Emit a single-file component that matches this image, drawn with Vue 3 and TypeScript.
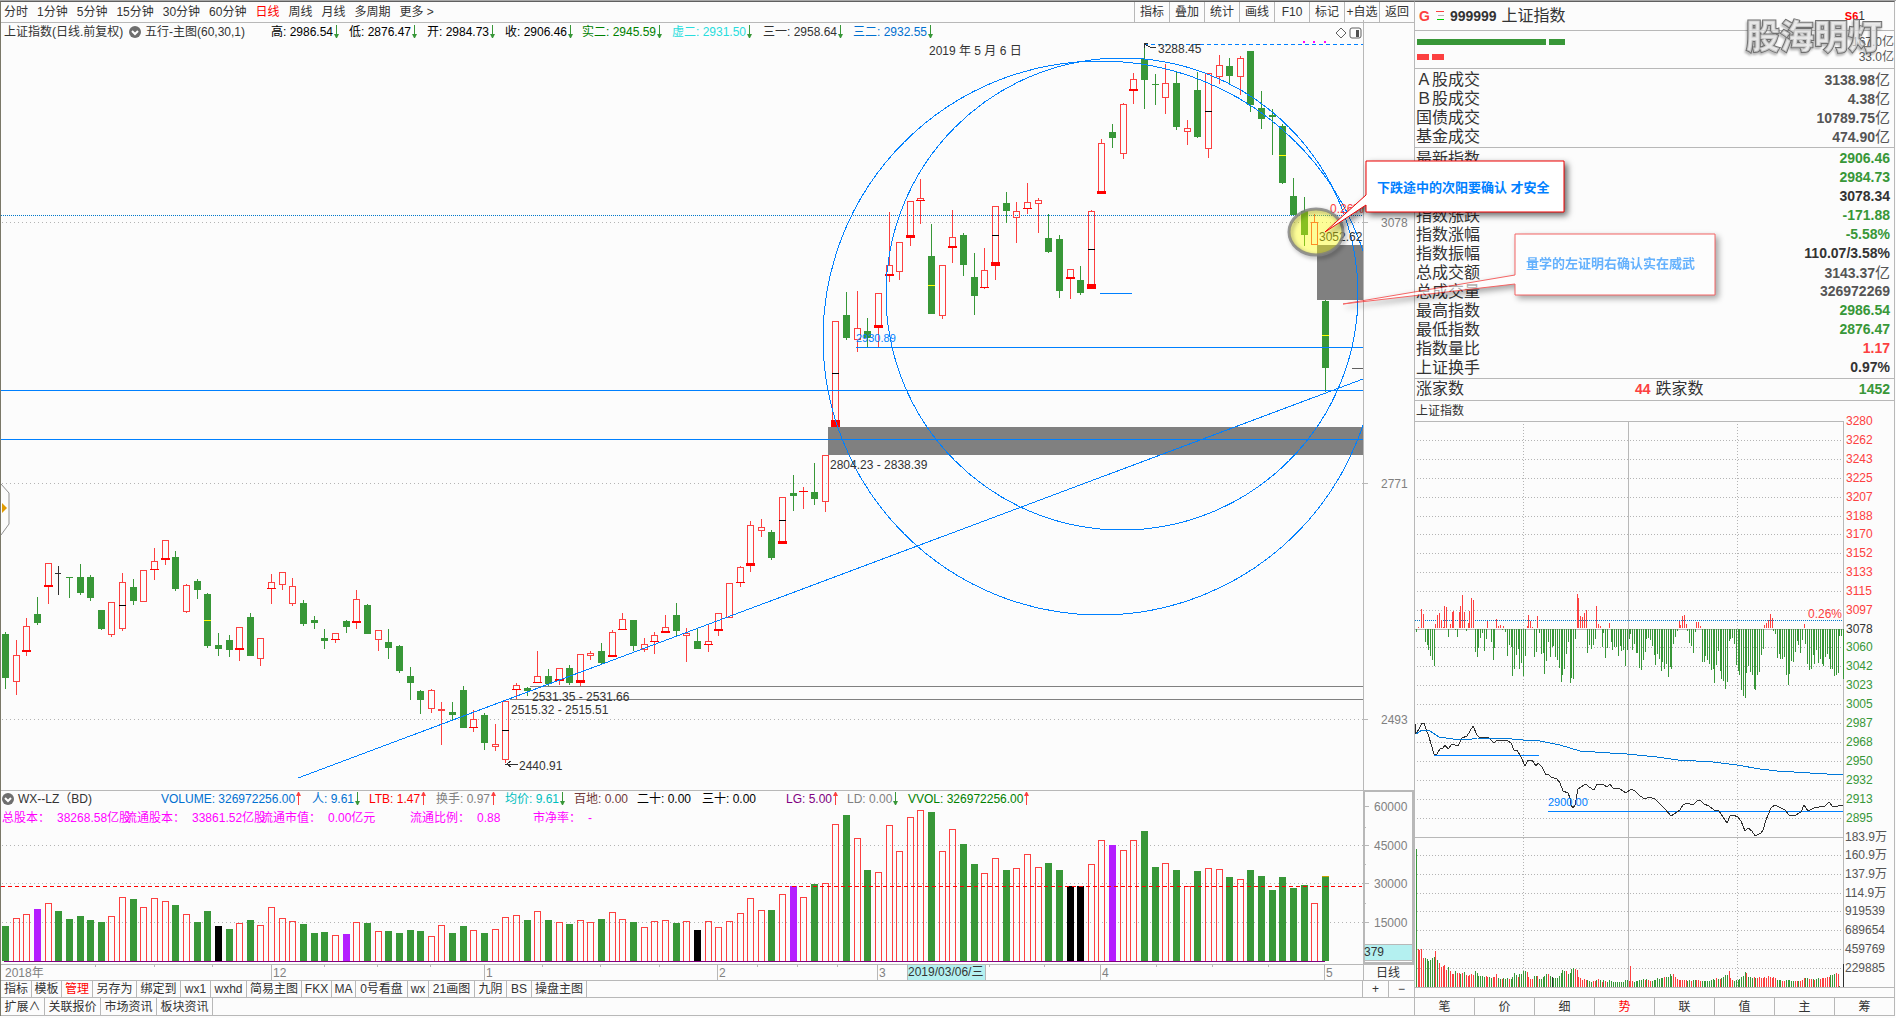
<script setup lang="ts">
type Tone = 'R' | 'G' | 'K' | 'P'
type Point = [number, number]

/* ---------- path helpers ---------- */
const box = (x: number, y: number, w: number, h: number) => `M${x} ${y}h${w}v${h}h${-w}z`
const dotsH = (x1: number, x2: number, y: number, step: number) => {
  let d = ''
  for (let x = x1; x < x2; x += step) d += box(x, y, 1, 1)
  return d
}
const dotsV = (y1: number, y2: number, x: number, step: number) => {
  let d = ''
  for (let y = y1; y < y2; y += step) d += box(x, y, 1, 1)
  return d
}
const third = (v: number) => Math.floor(v / 3)

/* ---------- toolbars ---------- */
const periods = ['分时', '1分钟', '5分钟', '15分钟', '30分钟', '60分钟', '日线', '周线', '月线', '多周期', '更多 >']
const actions = ['指标', '叠加', '统计', '画线', 'F10', '标记', '+自选', '返回']
const templates = ['指标', '模板', '管理', '另存为', '绑定到', 'wx1', 'wxhd', '简易主图', 'FKX', 'MA', '0号看盘', 'wx', '21画图', '九阴', 'BS', '操盘主图']
const feeds = ['扩展∧', '关联报价', '市场资讯', '板块资讯']
const sideTabs = ['笔', '价', '细', '势', '联', '值', '主', '筹']

interface Readout { label: string; tone: string; dir?: 'up' | 'down' }
const priceReadouts: Readout[] = [
  { label: '高: 2986.54', tone: 'black', dir: 'down' },
  { label: '低: 2876.47', tone: 'black', dir: 'down' },
  { label: '开: 2984.73', tone: 'black', dir: 'down' },
  { label: '收: 2906.46', tone: 'black', dir: 'down' },
  { label: '实二: 2945.59', tone: 'green', dir: 'down' },
  { label: '虚二: 2931.50', tone: 'cyan', dir: 'down' },
  { label: '三一: 2958.64', tone: 'dark', dir: 'down' },
  { label: '三二: 2932.55', tone: 'blue', dir: 'down' },
]
const volumeReadouts: Readout[] = [
  { label: 'VOLUME: 326972256.00', tone: 'blue', dir: 'up' },
  { label: '人: 9.61', tone: 'blue', dir: 'down' },
  { label: 'LTB: 1.47', tone: 'red', dir: 'up' },
  { label: '换手: 0.97', tone: 'grey', dir: 'up' },
  { label: '均价: 9.61', tone: 'teal', dir: 'down' },
  { label: '百地: 0.00', tone: 'brown' },
  { label: '二十: 0.00', tone: 'black' },
  { label: '三十: 0.00', tone: 'black' },
  { label: 'LG: 5.00', tone: 'purple', dir: 'up' },
  { label: 'LD: 0.00', tone: 'grey', dir: 'down' },
  { label: 'VVOL: 326972256.00', tone: 'green', dir: 'up' },
]
const shareFacts = [
  ['总股本：', '38268.58亿股'],
  ['流通股本：', '33861.52亿股'],
  ['流通市值：', '0.00亿元'],
  ['流通比例：', '0.88'],
  ['市净率：', '-'],
]

/* ---------- candles: tone, high, body top, body bottom, low, base mark, half line ---------- */
type Candle = [Tone, number, number, number, number, number?, number?]
const candles: Candle[] = [
  ['G', 632, 634, 678, 689], ['R', 640, 655, 682, 695], ['R', 618, 626, 652, 656, 2], ['G', 597, 614, 623, 625],
  ['R', 563, 563, 587, 604, 2], ['K', 566, 573, 574, 595], ['G', 577, 577, 578, 598], ['G', 564, 577, 593, 595],
  ['G', 575, 577, 598, 601], ['G', 610, 610, 629, 630], ['R', 602, 602, 635, 637], ['R', 573, 582, 629, 631, 0, 605],
  ['G', 579, 587, 601, 605], ['R', 570, 570, 602, 602], ['R', 548, 561, 570, 580, 1], ['R', 540, 540, 560, 565, 2],
  ['G', 551, 557, 589, 591], ['R', 584, 585, 612, 613], ['G', 579, 581, 590, 599], ['G', 593, 594, 646, 648, 0, 620],
  ['G', 633, 645, 649, 656], ['G', 635, 640, 650, 657], ['R', 627, 627, 650, 661, 2], ['G', 613, 617, 656, 656],
  ['R', 638, 638, 659, 666], ['R', 574, 582, 589, 604, 1], ['R', 572, 572, 585, 590], ['R', 578, 586, 604, 606],
  ['G', 600, 603, 624, 626], ['G', 616, 620, 623, 629], ['G', 629, 638, 641, 649], ['R', 633, 633, 640, 643, 1],
  ['G', 620, 621, 627, 633], ['R', 590, 599, 623, 629, 2], ['G', 604, 605, 634, 634], ['R', 630, 630, 640, 651],
  ['G', 629, 642, 648, 659], ['G', 645, 646, 671, 673], ['G', 667, 676, 683, 700], ['G', 690, 691, 700, 714],
  ['R', 689, 690, 709, 713], ['R', 702, 709, 711, 745], ['G', 702, 712, 715, 721], ['G', 686, 690, 728, 728],
  ['R', 710, 719, 728, 732, 1], ['G', 713, 715, 743, 750], ['R', 724, 744, 747, 751], ['R', 701, 701, 760, 763, 0, 730],
  ['R', 683, 685, 690, 699, 1], ['G', 687, 688, 691, 696], ['R', 651, 676, 683, 683, 1], ['G', 669, 676, 684, 686],
  ['R', 668, 668, 681, 685, 2], ['G', 665, 668, 683, 685], ['R', 654, 654, 683, 686, 3], ['R', 651, 653, 656, 660],
  ['G', 643, 651, 663, 665], ['R', 630, 632, 657, 657, 2], ['R', 613, 619, 630, 630, 1], ['G', 620, 620, 646, 651],
  ['R', 638, 644, 650, 652], ['R', 632, 635, 642, 654, 1], ['R', 615, 627, 633, 633, 2], ['G', 603, 615, 631, 636],
  ['R', 628, 633, 636, 662], ['G', 629, 641, 649, 649], ['R', 624, 641, 645, 652, 1], ['R', 613, 613, 631, 636, 2],
  ['R', 583, 583, 618, 618], ['R', 566, 567, 583, 587, 1], ['R', 521, 525, 566, 572, 3], ['R', 519, 527, 531, 537],
  ['G', 530, 532, 558, 560], ['R', 497, 497, 544, 544, 3, 520], ['G', 475, 493, 496, 511], ['R', 487, 491, 492, 509, 1],
  ['G', 463, 492, 499, 505], ['R', 455, 455, 502, 512], ['R', 321, 321, 427, 427, 7, 373], ['G', 292, 315, 338, 340],
  ['R', 291, 328, 340, 352], ['G', 318, 331, 338, 347], ['R', 293, 293, 328, 347, 3], ['R', 212, 265, 276, 282, 2],
  ['R', 242, 242, 272, 280], ['R', 201, 201, 238, 246, 3], ['R', 179, 198, 201, 224, 1], ['G', 224, 256, 314, 314, 0, 285],
  ['R', 265, 265, 316, 319], ['R', 210, 237, 248, 263, 2], ['G', 233, 235, 265, 276], ['G', 253, 277, 296, 315],
  ['R', 248, 270, 288, 289, 1], ['R', 206, 206, 266, 280, 4, 235], ['G', 192, 203, 211, 223], ['R', 202, 211, 218, 243],
  ['R', 183, 202, 209, 214, 1], ['R', 198, 200, 204, 233], ['G', 214, 238, 252, 253], ['G', 235, 239, 291, 298],
  ['R', 269, 269, 279, 299, 2], ['G', 266, 280, 293, 295], ['R', 210, 211, 289, 289, 5, 249], ['R', 139, 143, 194, 194, 3],
  ['G', 124, 132, 138, 148], ['R', 103, 104, 154, 159], ['R', 73, 79, 91, 104, 2], ['G', 45, 59, 80, 109],
  ['G', 74, 84, 85, 105], ['R', 64, 83, 98, 114], ['G', 72, 83, 127, 130], ['R', 120, 128, 132, 145],
  ['G', 72, 90, 137, 138], ['R', 73, 73, 149, 158, 0, 111], ['R', 55, 65, 77, 84], ['G', 58, 66, 76, 84],
  ['R', 56, 58, 77, 95], ['G', 51, 51, 105, 112], ['G', 91, 108, 119, 129], ['G', 109, 115, 117, 155],
  ['G', 124, 126, 183, 184, 0, 155], ['G', 178, 196, 215, 215], ['G', 197, 211, 235, 246], ['R', 214, 222, 245, 245],
  ['G', 300, 301, 368, 392, 0, 335],
]
const slotX = (i: number) => Math.round(5 + (i * 1320) / 124)

const hollow = (x: number, y: number, w: number, h: number) =>
  h <= 2 ? box(x, y, w, h) : box(x, y, w, 1) + box(x, y + h - 1, w, 1) + box(x, y, 1, h) + box(x + w - 1, y, 1, h)

const candlePaths = { R: '', G: '', K: '', mark: '', halfUp: '', halfDown: '' }
candles.forEach(([tone, high, top, bottom, low, mark, half], i) => {
  const x = slotX(i)
  if (tone === 'R') {
    candlePaths.R += hollow(x - 3, top, 7, bottom - top)
    if (top > high) candlePaths.R += box(x, high, 1, top - high)
    if (low > bottom) candlePaths.R += box(x, bottom, 1, low - bottom)
  } else if (tone === 'G') {
    candlePaths.G += box(x - 3, top, 7, bottom - top) + box(x, high, 1, low - high)
  } else {
    candlePaths.K += box(x - 3, top, 6, bottom - top) + box(x, high, 1, low - high)
  }
  if (mark) candlePaths.mark += box(x - 4, bottom - mark, 9, mark)
  if (half) candlePaths[tone === 'R' ? 'halfUp' : 'halfDown'] += box(x - 3, half, 7, 1)
})

/* ---------- volume columns: tone and height above the base line ---------- */
const columns = `G35 R43 R47 P52 R58 G50 G42 G45 G41 G39 R45 R64 G62 R54 R63 R60 G56 R47 G39 G50 K35 G32 R38 G41 R36
R54 R43 R40 G37 G28 G29 R26 P27 R39 G38 R30 G30 G28 G31 G30 R25 R36 G28 G35 R31 G28 R32 R44 R46 G41 R50 G41 R39 G37
R41 R39 G42 R49 R42 G39 R34 R40 R41 G38 R40 K31 R40 R34 R40 R48 R63 R51 G51 R67 P75 R64 G77 R78 R137 G146 R123
G91 R89 R136 R110 R144 R151 G149 R110 R132 G117 G97 R88 R103 G91 R93 R107 R94 G98 G91 K75 K75 R97 R121 P116 R111 R121
G130 G94 R98 G91 R75 G90 R93 R92 G84 R82 G91 G85 G71 G84 G73 G76 R58 G84`
  .split(/\s+/)
const volumePaths: Record<Tone, string> = { R: '', G: '', K: '', P: '' }
columns.forEach((entry, i) => {
  const tone = entry[0] as Tone
  const h = Number(entry.slice(1))
  const x = slotX(i) - 3
  const y = 961 - h
  volumePaths[tone] += tone === 'R' ? box(x, y, 7, 1) + box(x, y, 1, h) + box(x + 6, y, 1, h) : box(x, y, 7, h)
})

const priceGrid = [222, 483, 719].map((y) => dotsH(2, 1363, y, 4)).join('')
const volumeGrid = [845, 883, 922].map((y) => dotsH(2, 1363, y, 4)).join('')
const prevCloseDots = dotsH(1, 1363, 215, 2)
const priceScale = [{ y: 222, text: '3078' }, { y: 483, text: '2771' }, { y: 719, text: '2493' }]
const volumeScale = [{ y: 806, text: '60000' }, { y: 845, text: '45000' }, { y: 883, text: '30000' }, { y: 922, text: '15000' }]
const months = [{ x: 271, text: '12' }, { x: 484, text: '1' }, { x: 717, text: '2' }, { x: 877, text: '3' }, { x: 1100, text: '4' }, { x: 1324, text: '5' }]
const weekTicks = [95, 154, 212, 324, 377, 430, 542, 600, 659, 757, 797, 837, 989, 1044, 1156, 1212, 1268]
const timeTicks = months.map((m) => box(m.x, 965, 1, 15)).join('') + weekTicks.map((x) => box(x, 965, 1, 2)).join('')
const volumeTicks = volumeScale.map((s) => box(1365, s.y, 4, 1)).join('') + [827, 864, 903].map((y) => box(1365, y, 1, 1)).join('')

/* ---------- quote panel ---------- */
interface Quote { name: string; value: string; unit?: string; tone: string }
const turnover: Quote[] = [
  { name: 'Ａ股成交', value: '3138.98', unit: '亿', tone: 'mid' },
  { name: 'Ｂ股成交', value: '4.38', unit: '亿', tone: 'mid' },
  { name: '国债成交', value: '10789.75', unit: '亿', tone: 'mid' },
  { name: '基金成交', value: '474.90', unit: '亿', tone: 'mid' },
]
const quotes: Quote[] = [
  { name: '最新指数', value: '2906.46', tone: 'down' },
  { name: '', value: '2984.73', tone: 'down' },
  { name: '', value: '3078.34', tone: 'dark' },
  { name: '指数涨跌', value: '-171.88', tone: 'down' },
  { name: '指数涨幅', value: '-5.58%', tone: 'down' },
  { name: '指数振幅', value: '110.07/3.58%', tone: 'dark' },
  { name: '总成交额', value: '3143.37', unit: '亿', tone: 'mid' },
  { name: '总成交量', value: '326972269', tone: 'mid' },
  { name: '最高指数', value: '2986.54', tone: 'down' },
  { name: '最低指数', value: '2876.47', tone: 'down' },
  { name: '指数量比', value: '1.17', tone: 'up' },
  { name: '上证换手', value: '0.97%', tone: 'dark' },
]

/* ---------- intraday chart, sampled on a grid of three units per pixel ---------- */
const pairs = (s: string): Point[] => s.trim().split(/\s+/).map((p) => p.split(',').map(Number) as Point)
const surges = pairs(`25,711 34,657 40,672 76,702 82,675 88,669 94,690 100,711 103,648 109,651 121,702 127,666 130,663
148,666 151,648 157,615 163,666 175,699 178,663 184,624 190,630 232,693 259,687 265,708 271,705 280,708 352,708 355,675
361,693 367,711 382,678 502,612 505,624 511,678 517,681 523,669 529,660 559,648 565,702 571,708 598,699 808,693 811,705
817,678 823,675 829,702 859,696 865,696 871,708 1063,705 1069,699 1075,690 1081,672 1087,684 1183,702`)
const slumps = pairs(`19,726 46,756 52,765 55,780 61,798 67,810 73,828 115,741 136,720 142,741 169,723 196,786 202,801
205,774 211,744 217,729 223,783 229,747 244,756 250,810 253,774 277,720 286,726 292,798 298,765 304,771 307,858 313,837
319,795 325,777 328,837 334,819 340,858 346,798 373,801 379,786 388,729 394,792 400,789 403,852 409,813 415,756 421,801
427,771 430,768 436,801 442,810 448,834 454,876 457,855 463,837 469,792 475,756 481,879 484,864 490,867 496,747 532,789
538,765 544,777 550,765 556,747 577,771 580,729 586,804 592,774 604,756 607,780 613,771 619,771 625,798 631,768 634,783
640,780 646,828 652,780 658,747 661,732 667,780 673,762 679,789 682,789 688,834 694,840 700,810 706,786 709,747 715,744
721,750 727,768 733,795 736,825 742,792 748,807 754,843 757,816 763,837 769,822 775,861 781,831 784,837 790,762 796,741
802,723 832,723 838,759 844,768 850,789 856,726 877,816 883,816 886,798 892,810 898,822 904,840 910,837 913,879 919,825
925,783 931,843 934,867 940,873 946,897 952,876 958,753 961,747 967,744 973,762 979,825 985,843 988,855 994,900 1000,918
1006,924 1009,849 1015,828 1021,846 1027,855 1033,897 1036,900 1042,855 1048,846 1054,795 1060,777 1090,723 1096,732
1102,804 1108,792 1111,807 1117,807 1123,801 1129,855 1135,885 1138,852 1144,813 1150,816 1156,786 1162,753 1165,765
1171,789 1177,750 1186,762 1192,822 1198,840 1204,837 1210,795 1213,822 1219,780 1225,819 1231,807 1237,822 1240,828
1246,801 1252,792 1258,807 1261,837 1267,837 1273,858 1279,855 1285,849 1288,738 1294,738 1300,867`)
const surgePath = surges.map(([x, y]) => box(1410 + third(x), 390 + third(y), 1, 238 - third(y))).join('')
const slumpPath = slumps.map(([x, y]) => box(1410 + third(x), 629, 1, third(y) - 239)).join('')

const trace = (s: string) => pairs(s).map(([x, y]) => `${1410 + Math.round(x / 3)},${700 + Math.round(y / 3)}`).join(' ')
const indexLine = trace(`15,72 19,102 28,88 37,70 43,70 49,87 58,112 73,163 82,163 91,148 100,145 106,136 115,146 127,133
145,139 157,114 172,108 190,79 202,105 211,115 235,112 253,130 262,121 292,121 304,128 313,151 322,151 334,172 346,198
355,181 367,181 379,198 385,190 397,202 409,226 415,222 424,230 442,238 451,250 460,274 475,280 481,295 484,316 490,325
496,316 505,268 514,261 529,253 538,261 553,271 562,253 580,253 592,262 601,253 610,264 631,266 649,280 664,268 676,274
691,289 706,297 718,291 736,297 748,310 766,328 784,348 802,336 811,330 820,316 832,309 850,315 862,303 871,301 883,312
898,318 913,331 928,333 940,352 952,370 961,349 970,345 985,350 994,364 1006,394 1015,384 1027,392 1036,409 1054,399
1060,390 1069,360 1084,325 1096,314 1108,322 1126,330 1138,345 1153,349 1174,337 1183,316 1195,333 1213,325 1246,318
1258,307 1270,321 1298,316`)
const averageLine = trace(`19,103 37,91 61,92 88,112 130,118 186,118 200,115 305,116 340,121 390,124 450,134 510,153
600,160 650,163 740,170 805,181 910,187 980,196 1050,208 1100,213 1200,219 1298,226`)

const ticks = `19G447 25R748 28R750 34R747 40R774 46G774 52G777 55G783 61G780 67G774 73G771 76R753 82G780 88R789 94R801
100R798 103R795 109R810 115G801 121R813 127R822 130R822 136G813 142R819 148R819 151G822 157R819 163G816 169R825 175R828
178R825 184R822 190R825 196G813 202G819 205G828 211G828 217G828 223G831 229R828 232R831 238G831 244G834 250R831 253R831
259R822 265G834 271G837 277R837 280G834 286G837 292G834 298R837 304G837 307G831 313G819 319G825 325R831 328G822 334G822
340G813 346G813 352R816 355R831 361R837 367R837 373G828 379G828 382R828 388G837 394G837 400G831 403G828 409G822 415R822
421G828 427K831 430G834 436G834 442G834 448G828 454G819 457G810 463G813 469R813 475G822 481G819 484G807 490G804 496R807
502R810 505R831 511R834 517R840 523R837 529R840 532G840 538G843 544G846 550R843 556R843 559G840 565R837 571G840 577R846
580G840 586R843 592G846 598G840 604G843 610G846 616G846 622G846 628G846 634G846 640G846 646G840 652G840 658R843 661R798
667R843 673G846 679G843 682G843 688G840 694G840 700G837 706R840 709G837 715R840 721R843 727G843 733G840 736G840 742G834
748G837 754G834 757G834 763R831 769G831 775G831 781G822 784G828 790R822 796R831 802R837 808R840 811R840 817R840 823R840
829R840 832G844 838G840 844R843 850G840 856G840 859R840 865R840 871R843 877G843 883G843 886G843 892G843 898G843 904G840
910G837 913G840 919R834 925G837 931R837 934G834 940G831 946G825 952G825 958R813 961R834 967R840 973G843 979G840 985G840
988G837 994G831 1000G828 1006G816 1009R819 1015G831 1021G831 1027G834 1033R831 1036G834 1042R834 1048R831 1054R834
1060R834 1063R831 1069R834 1075R828 1081R831 1087R834 1090R831 1096R834 1102G840 1108G840 1111G840 1117R843 1123R843
1129G840 1135G840 1138G840 1144G843 1150G843 1156R843 1162R843 1165G843 1171R843 1177R840 1183R834 1186G834 1192G834
1198R837 1204R837 1210G837 1213R840 1219G837 1225G834 1231R837 1237R834 1240R834 1246R834 1252R831 1258R831 1261G825
1267G825 1273G822 1279R819 1285R822 1288G858`.trim().split(/\s+/)
const tickPaths: Record<string, string> = { R: '', G: '', K: '' }
ticks.forEach((t) => {
  const m = /^(\d+)([RGK])(\d+)$/.exec(t)
  if (!m) return
  const top = 700 + third(Number(m[3]))
  tickPaths[m[2]] += box(1410 + third(Number(m[1])), top, 1, 987 - top)
})

const indexScale = ['3280', '3262', '3243', '3225', '3207', '3188', '3170', '3152', '3133', '3115', '3097', '3078', '3060', '3042',
  '3023', '3005', '2987', '2968', '2950', '2932', '2913', '2895', '183.9万', '160.9万', '137.9万', '114.9万', '919539', '689654', '459769', '229885']
const scaleY = [421, 440, 459, 478, 497, 516, 534, 553, 572, 591, 610, 629, 647, 666, 685, 704, 723, 742, 761, 780, 799, 818, 837, 855, 874, 893, 911, 930, 949, 968]
const scaleTone = (i: number) => (i < 11 ? 'up' : i === 11 ? 'dark' : i < 22 ? 'down' : 'mid')
const sideGrid = scaleY.filter((_, i) => ![0, 11, 22].includes(i)).map((y) => dotsH(1417, 1843, y, 3)).join('')
  + [1523, 1737].map((x) => dotsV(424, 987, x, 3)).join('')
</script>

<template>
  <div class="terminal">
    <main class="left">
      <nav class="toolbar">
        <div class="periods">
          <button v-for="p in periods" :key="p" :class="{ active: p === '日线' }">{{ p }}</button>
        </div>
        <div class="actions">
          <button v-for="a in actions" :key="a">{{ a }}</button>
        </div>
      </nav>

      <section class="price">
        <header class="price-head">
          <div class="price-titles">
            <span class="dark">上证指数(日线.前复权)</span>
            <svg class="knob" viewBox="0 0 12 12"><circle cx="6" cy="6" r="6" fill="#6e6e6e" /><path d="M3 5l3 3 3-3" fill="none" stroke="#fff" stroke-width="2" /></svg>
            <span class="dark">五行-主图(60,30,1)</span>
            <span v-for="r in priceReadouts" :key="r.label" :class="r.tone">{{ r.label }}<svg class="arrow" viewBox="0 0 5 13"><path d="M2 0h1v9h2L3 13H2L0 9h2z" fill="#389738" /></svg></span>
          </div>
          <div class="head-icons">
            <svg viewBox="0 0 28 14">
              <path d="M7 2l5 5-5 5-5-5z" fill="none" stroke="#606060" />
              <rect x="16" y="2" width="11" height="10" rx="2" fill="none" stroke="#606060" stroke-width="1" />
              <rect x="22" y="4" width="3" height="7" fill="#505050" />
            </svg>
          </div>
        </header>

        <svg class="plot" viewBox="1 41 1413 749" role="img" aria-label="上证指数日线">
          <defs>
            <clipPath id="plot-area"><rect x="1" y="20" width="1362" height="770" /></clipPath>
          </defs>
          <g clip-path="url(#plot-area)">
            <path :d="priceGrid" fill="#b4b4b4" />
            <path :d="prevCloseDots" fill="#0078c8" />
            <path d="M1144 44H1363" stroke="#0080ff" stroke-dasharray="4 3" />
            <path d="M530 686h833v1h-833zM510 699h853v1h-853z" fill="#808080" />
            <path :d="candlePaths.R" fill="#fc4040" />
            <path :d="candlePaths.G" fill="#389738" />
            <path :d="candlePaths.K" fill="#303030" />
            <path :d="candlePaths.mark" fill="#ff0000" />
            <path :d="candlePaths.halfUp" fill="#000" />
            <path :d="candlePaths.halfDown" fill="#ffff00" />
            <path d="M828 427h535v28h-535zM1317 245h46v55h-46z" fill="#808080" />
            <path d="M1352 368h11v1h-11z" fill="#606060" />
            <path d="M1 390h1362v1H1zM1 439h1362v1H1zM856 347h507v1H856zM1100 293h32v1h-32z" fill="#0080ff" />
            <g fill="none" stroke="#0080ff">
              <circle cx="1100" cy="338" r="277" />
              <circle cx="1122" cy="294" r="236" />
              <path d="M298 778L1363 379" />
            </g>
            <path d="M1303 41h2v2h-2zM1313 41h2v2h-2zM1324 41h2v2h-2z" fill="#ff00ff" />
            <path d="M518 764h-11l4-3m-4 3l4 3M1144 48v-5h4m-4 1l8 4 4-1" fill="none" stroke="#303030" />
            <g class="label" fill="#333">
              <text x="929" y="55">2019 年 5 月 6 日</text>
              <text x="1158" y="53">3288.45</text>
              <text x="1319" y="241">3052.62</text>
              <text x="830" y="469">2804.23 - 2838.39</text>
              <text x="532" y="701">2531.35 - 2531.66</text>
              <text x="511" y="714">2515.32 - 2515.51</text>
              <text x="519" y="770">2440.91</text>
              <text x="1330" y="213" fill="#fc4040">0.26%</text>
              <text x="856" y="342" class="small" fill="#0080ff">2930.89</text>
            </g>
          </g>
          <path d="M1363 20h1v770h-1zM1364 222h4v1h-4zM1364 483h4v1h-4zM1364 719h4v1h-4z" fill="#b8b8b8" />
          <g class="label" fill="#808080">
            <text v-for="s in priceScale" :key="s.text" x="1381" :y="s.y + 5">{{ s.text }}</text>
          </g>
          <g class="smooth">
            <path d="M1 484l8 9v31l-8 11" fill="#fcfcfc" stroke="#909090" stroke-width="1" />
            <path d="M2 503l5 5-5 5z" fill="#e09a00" />
            <ellipse cx="1316" cy="232" rx="27" ry="23" fill="#ffff00" fill-opacity=".4" />
            <ellipse class="halo" cx="1316" cy="232" rx="27" ry="23" fill="none" stroke="#808080" stroke-opacity=".8" stroke-width="3" />
          </g>
        </svg>
      </section>

      <section class="volume">
        <div class="volume-head">
          <div class="volume-titles">
            <svg class="knob" viewBox="0 0 12 12"><circle cx="6" cy="6" r="6" fill="#6e6e6e" /><path d="M3 5l3 3 3-3" fill="none" stroke="#fff" stroke-width="2" /></svg>
            <span class="dark">WX--LZ（BD)</span>
            <span v-for="r in volumeReadouts" :key="r.label" :class="r.tone">{{ r.label }}<svg v-if="r.dir === 'down'" class="arrow" viewBox="0 0 5 13"><path d="M2 0h1v9h2L3 13H2L0 9h2z" fill="#389738" /></svg><svg v-else-if="r.dir" class="arrow" viewBox="0 0 5 13"><path d="M2 13h1V4h2L3 0H2L0 4h2z" fill="#fc4040" /></svg></span>
          </div>
          <div class="facts">
            <span v-for="f in shareFacts" :key="f[0]"><b>{{ f[0] }}</b><i>{{ f[1] }}</i></span>
          </div>
        </div>
        <svg class="plot" viewBox="1 790 1413 190" role="img" aria-label="成交量">
          <path d="M1 790h1413v1H1z" fill="#b8b8b8" />
          <path :d="volumeGrid" fill="#b4b4b4" />
          <path :d="volumePaths.R" fill="#fc4040" />
          <path :d="volumePaths.G" fill="#389738" />
          <path :d="volumePaths.K" fill="#000" />
          <path :d="volumePaths.P" fill="#b41eff" />
          <path d="M1322 876h7v1h-7z" fill="#c8a000" />
          <path d="M4 961h1321v1H4z" fill="#800080" />
          <path d="M1 886H1362" stroke="#ff0000" stroke-dasharray="4 3" />
          <path d="M1 964h1413v1H1z" fill="#b8b8b8" />
          <path d="M1363 790h51v2h-51zM1363 790h2v174h-2zM1412 790h2v174h-2zM1363 962h51v2h-51zM1363 964h1v16h-1z" fill="#b8b8b8" />
          <path :d="timeTicks" fill="#b8b8b8" />
          <path :d="volumeTicks" fill="#b8b8b8" />
          <rect x="1365" y="944" width="47" height="16" fill="#b4f0f0" />
          <path d="M1365 944h47v1h-47zM1365 960h47v1h-47z" fill="#b8b8b8" />
          <rect x="907" y="965" width="79" height="15" fill="#b4f0f0" />
          <path d="M907 965h1v15h-1zM985 965h1v15h-1z" fill="#b8b8b8" />
          <g class="label" fill="#808080">
            <text v-for="s in volumeScale" :key="s.text" x="1374" :y="s.y + 5">{{ s.text }}</text>
            <text x="5" y="977">2018年</text>
            <text v-for="m in months" :key="m.x" :x="m.x + 2" y="977">{{ m.text }}</text>
            <text x="1364" y="956" fill="#333">379</text>
            <text x="908" y="976" fill="#333">2019/03/06/三</text>
            <text x="1376" y="977" fill="#333">日线</text>
          </g>
        </svg>
      </section>

      <nav class="templates">
        <button v-for="(t, i) in templates" :key="i" :class="{ active: t === '管理' }">{{ t }}</button>
        <div class="zoomers">
          <button aria-label="放大">+</button>
          <button aria-label="缩小">−</button>
        </div>
      </nav>
      <nav class="feeds">
        <button v-for="f in feeds" :key="f">{{ f }}</button>
      </nav>
    </main>

    <aside class="side">
      <header class="symbol">
        <b class="up">G</b>
        <svg class="bars" viewBox="0 0 8 10"><path d="M0 0h8v1H0z" fill="#fc4040" /><path d="M2 4h6v1H2z" fill="#b8b8b8" /><path d="M1 8h7v1H1z" fill="#00d000" /></svg>
        <b>999999</b>
        <span class="name">上证指数</span>
        <span class="source"><b>S6</b>1</span>
      </header>

      <section class="strength">
        <div class="meter green-meter"><i></i><i></i><span>167.0亿</span></div>
        <div class="meter"><i></i><i></i><span>33.0亿</span></div>
      </section>
      <div class="watermark">股海明灯</div>

      <table class="quotes">
        <tbody>
          <tr v-for="q in turnover" :key="q.name">
            <th scope="row">{{ q.name }}</th>
            <td :class="q.tone"><b>{{ q.value }}</b><span>{{ q.unit }}</span></td>
          </tr>
        </tbody>
      </table>
      <table class="quotes">
        <tbody>
          <tr v-for="(q, i) in quotes" :key="i">
            <th scope="row">{{ q.name }}</th>
            <td :class="q.tone"><b>{{ q.value }}</b><span v-if="q.unit">{{ q.unit }}</span></td>
          </tr>
        </tbody>
      </table>
      <section class="breadth">
        <div><span>涨家数</span><b class="up">44</b></div>
        <div><span>跌家数</span><b class="down">1452</b></div>
      </section>

      <h2 class="mini-title">上证指数</h2>
      <svg class="plot" viewBox="1415 421 479 576" role="img" aria-label="上证指数分时">
        <path :d="sideGrid" fill="#b4b4b4" />
        <path d="M1415 421h429v1h-429zM1415 629h429v1h-429zM1415 837h429v1h-429zM1415 987h479v1h-479zM1628 421h1v566h-1zM1843 421h1v566h-1z" fill="#b8b8b8" />
        <path :d="dotsH(1415, 1843, 620, 2)" fill="#0078c8" />
        <path :d="surgePath" fill="#fc4040" />
        <path :d="slumpPath" fill="#389738" />
        <path :d="tickPaths.R" fill="#fc4040" />
        <path :d="tickPaths.G" fill="#389738" />
        <path :d="tickPaths.K" fill="#303030" />
        <path d="M1843 964h1v23h-1z" fill="#303030" />
        <path d="M1434 755h105v1h-105zM1548 811h295v1h-295z" fill="#0080ff" />
        <polyline :points="indexLine" fill="none" stroke="#303030" />
        <polyline :points="averageLine" fill="none" stroke="#0078d8" />
        <g class="label">
          <text v-for="(s, i) in indexScale" :key="s" :x="i < 22 ? 1846 : 1845" :y="scaleY[i] + 4" :class="scaleTone(i)">{{ s }}</text>
          <text x="1808" y="618" class="up">0.26%</text>
          <text x="1548" y="806" class="small" fill="#0080ff">2900.00</text>
        </g>
      </svg>
      <nav class="side-tabs">
        <button v-for="t in sideTabs" :key="t" :class="{ active: t === '势' }">{{ t }}</button>
      </nav>

      <svg class="notes" viewBox="1294 2 500 340">
        <g class="note note-soft">
          <path d="M1515 234h200v61h-200v-11L1343 304 1515 275z" />
          <text x="1526" y="268">量学的左证明右确认实在威武</text>
        </g>
        <g class="note">
          <path d="M1366 161h198v51h-198v-7L1325 232 1366 195z" />
          <text x="1377" y="192">下跌途中的次阳要确认 才安全</text>
        </g>
      </svg>
    </aside>
  </div>
</template>

<style>
body {
  margin: 0;
  background: #fcfcfc;
}
</style>

<style scoped>
.terminal {
  display: flex;
  align-items: flex-start;
  border-top: 1px solid #a8a8a8;
  padding-right: 1px;
  background: #fcfcfc;
  color: #333;
  font-family: "Liberation Sans", "Noto Sans CJK SC", sans-serif;
  font-size: 12px;
  line-height: 16px;
}
button {
  margin: 0;
  padding: 0;
  border: 0;
  background: none;
  color: inherit;
  font: inherit;
  white-space: nowrap;
  text-align: center;
}
button.active { color: #f00; }
.left {
  flex: 1;
  min-width: 0;
  border-top: 1px solid #606060;
  border-left: 1px solid #7a7868;
  box-sizing: border-box;
}
.toolbar {
  display: flex;
  justify-content: space-between;
  height: 20px;
  border-bottom: 1px solid #b8b8b8;
}
.periods {
  display: flex;
  gap: 9px;
  padding-left: 3px;
}
.actions { display: flex; }
.actions button {
  width: 35px;
  border-left: 1px solid #b8b8b8;
}
.plot {
  display: block;
  width: 100%;
  height: auto;
  shape-rendering: crispEdges;
  overflow: visible;
}
.smooth { shape-rendering: geometricPrecision; }
.halo { filter: drop-shadow(2px 2px 2px rgba(0, 0, 0, .4)); }
.label { font-size: 12px; }
.small { font-size: 11px; }

.price-head {
  display: flex;
  height: 18px;
  padding-right: 50px;
}
.price-titles {
  display: grid;
  flex: 1;
  grid-template-columns: 125px 16px 126px 78px 78px 78px 77px 90px 91px 90px 90px;
  align-items: center;
  padding-left: 3px;
  white-space: nowrap;
}
.head-icons svg {
  display: block;
  width: 28px;
  height: 14px;
  margin: 3px 2px 0 0;
}
.knob {
  width: 12px;
  height: 12px;
}
.arrow {
  width: 5px;
  height: 13px;
  margin-left: 1px;
  vertical-align: -2px;
}
.volume { position: relative; }
.volume-head {
  position: absolute;
  top: 0;
  left: 1px;
  white-space: nowrap;
}
.volume-titles {
  display: grid;
  grid-template-columns: 16px 143px 151px 57px 67px 69px 69px 63px 65px 84px 61px 61px 130px;
  align-items: center;
  height: 18px;
}
.facts {
  display: grid;
  grid-template-columns: 123px 136px 149px 123px 80px;
  height: 20px;
  align-items: center;
  color: #f0f;
}
.facts b,
.facts i {
  font-weight: normal;
  font-style: normal;
}
.facts i { margin-left: 7px; }

.templates,
.feeds {
  display: grid;
  border-top: 1px solid #b8b8b8;
}
.templates {
  grid-template-columns: 31px 30px 31px 44px 44px 30px 36px 55px 30px 24px 52px 21px 46px 32px 25px 55px 1fr;
  height: 16px;
}
.feeds {
  grid-template-columns: 44px 56px 56px 56px;
  height: 17px;
  border-bottom: 1px solid #b8b8b8;
}
.templates > button,
.feeds > button { border-right: 1px solid #b8b8b8; }
.zoomers {
  display: flex;
  justify-content: flex-end;
}
.zoomers button {
  width: 26px;
  border-left: 1px solid #b8b8b8;
}

.black { color: #000; }
.dark { color: #333; fill: #333; }
.mid { color: #555; fill: #555; }
.grey { color: #808080; }
.green { color: #008000; }
.cyan { color: #28dcdc; }
.teal { color: #00bebe; }
.blue { color: #0070d0; }
.red { color: #f00; }
.brown { color: #703838; }
.purple { color: #800080; }
.up { color: #fc4040; fill: #fc4040; }
.down { color: #389738; fill: #389738; }

.side {
  position: relative;
  box-sizing: border-box;
  flex: none;
  width: 481px;
  border: 1px solid #b8b8b8;
  border-top-color: #606060;
  border-bottom: 0;
}
.symbol {
  display: flex;
  align-items: center;
  height: 28px;
  padding: 0 4px;
  border-bottom: 1px solid #b8b8b8;
  line-height: 20px;
}
.symbol b { font-size: 14px; }
.symbol .bars {
  width: 8px;
  height: 10px;
  margin: 0 6px;
}
.symbol .name {
  margin-left: 5px;
  font-size: 16px;
}
.symbol .source {
  margin: 0 25px 0 auto;
}
.symbol .source b {
  color: #f00;
  font-size: 11px;
}
.strength {
  height: 37px;
  border-bottom: 1px solid #b8b8b8;
}
.meter {
  display: flex;
  align-items: center;
  gap: 3px;
  height: 15px;
  padding-left: 2px;
}
.meter:first-child { padding-top: 3px; }
.meter i {
  width: 12px;
  height: 6px;
  background: #fc4040;
}
.green-meter i {
  width: 16px;
  background: #389738;
}
.green-meter i:first-child { width: 129px; }
.meter span {
  margin-left: auto;
  color: #555;
}
.watermark {
  position: absolute;
  top: 8px;
  right: 12px;
  color: rgba(255, 255, 255, .6);
  font: 900 34px/50px "Noto Sans CJK SC", sans-serif;
  -webkit-text-stroke: 2px #707070;
  paint-order: stroke fill;
  filter: drop-shadow(-1px 2px 1px rgba(0, 0, 0, .3));
}
.quotes {
  display: block;
  padding: 1px 0;
  border-bottom: 1px solid #b8b8b8;
  border-spacing: 0;
}
.quotes tbody,
.quotes tr { display: flex; flex-direction: column; }
.quotes tr {
  flex-direction: row;
  justify-content: space-between;
  height: 19px;
  padding: 0 4px 0 1px;
  line-height: 19px;
}
.quotes th {
  padding: 0;
  font-size: 16px;
  font-weight: normal;
}
.quotes td {
  padding: 0;
  font-size: 14px;
}
.quotes td span { font-size: 15px; }
.breadth {
  display: flex;
  height: 21px;
  border-bottom: 1px solid #b8b8b8;
  line-height: 20px;
}
.breadth div {
  display: flex;
  flex: 1;
  justify-content: space-between;
  padding: 0 4px 0 1px;
  font-size: 16px;
}
.breadth b { font-size: 14px; }
.mini-title {
  height: 20px;
  margin: 0;
  padding-left: 1px;
  font-size: 12px;
  font-weight: normal;
  line-height: 20px;
}
.side-tabs {
  display: flex;
  height: 17px;
  border-top: 1px solid #b8b8b8;
  border-bottom: 1px solid #b8b8b8;
}
.side-tabs button {
  flex: 1;
  border-right: 1px solid #b8b8b8;
}
.side-tabs button:last-child { border-right: 0; }

.notes {
  position: absolute;
  top: 0;
  left: -121px;
  width: 500px;
  height: 340px;
  pointer-events: none;
}
.note path {
  fill: #fff;
  stroke: #f00000;
  filter: drop-shadow(3px 3px 3px rgba(0, 0, 0, .6));
}
.note text {
  fill: #0080ff;
  font-size: 13px;
  font-weight: bold;
}
.note-soft { opacity: .6; }
</style>
